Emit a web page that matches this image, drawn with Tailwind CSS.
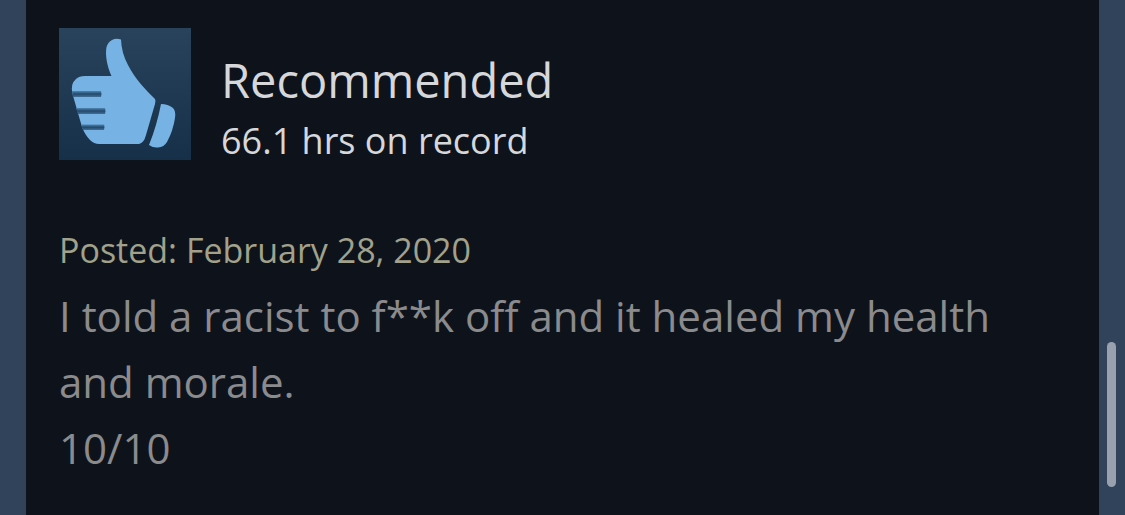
<!DOCTYPE html>
<html lang="en">
<head>
    <meta charset="UTF-8">
    <meta name="viewport" content="width=device-width, initial-scale=1.0">
    <title>Review - Recommended</title>
    <script src="https://cdn.jsdelivr.net/npm/@tailwindcss/browser@4"></script>
</head>
<body class="min-h-screen flex bg-[#30435b] px-[26px] font-['Open_Sans',sans-serif]">
    <main class="flex-1 bg-[#0e131b] px-[33px] pt-7">
        <!-- Verdict -->
        <header class="flex gap-[30px]">
            <svg class="w-[132px] h-[132px] shrink-0" viewBox="0 0 132 132" role="img" aria-label="Thumbs up">
                <defs>
                    <linearGradient id="tile" x1="0" y1="0" x2="0" y2="1">
                        <stop offset="0" stop-color="#28435b"/>
                        <stop offset="1" stop-color="#17304a"/>
                    </linearGradient>
                    <linearGradient id="gap" x1="0" y1="0" x2="0" y2="1">
                        <stop offset="0" stop-color="#4f86b2"/>
                        <stop offset="0.5" stop-color="#24486a"/>
                        <stop offset="1" stop-color="#3f6f98"/>
                    </linearGradient>
                </defs>
                <rect width="132" height="132" fill="url(#tile)"/>
                <!-- Hand -->
                <path fill="#76b2e4" d="M53 12Q57 10 62 11.500Q62.500 25 69 37C76 51 86 61 96 71Q97 73 96 76L87 107Q85 115 80 116H40Q35 116 31 112Q26 107 23 99L13.500 66Q11 56 17 51Q20 48 26 48H52.500C48 38 46 27 47.500 19Q49 14 53 12Z"/>
                <!-- Finger gaps -->
                <g fill="url(#gap)">
                    <path d="M13 63H42Q43 66 42 69H14Z"/>
                    <path d="M17 80H46Q47 83 46 86H19Z"/>
                    <path d="M22 96.500H45Q46 99 45 102H24Z"/>
                </g>
                <!-- Cuff -->
                <path fill="#76b2e4" d="M102 76Q109 76 114 80Q117 83 116 90Q114 103 108 114Q105 119 99 119.500Q94 120 90 117Q98 97 102 76Z"/>
            </svg>
            <div class="pt-6 text-[#d6d7da]">
                <h1 class="text-[47px] leading-[56px]">Recommended</h1>
                <p class="text-[36px] leading-[66px]">66.1 hrs on record</p>
            </div>
        </header>

        <!-- Review -->
        <p class="mt-[52px] text-[34px] leading-[48px] text-[#a1a18c]">Posted: February 28, 2020</p>
        <p class="mt-[9px] text-[42px] leading-[66px] text-[#8b8a8c]">I told a racist to f**k off and it healed my health and morale.<br>10/10</p>
    </main>

    <!-- Scroll thumb -->
    <div class="fixed right-[9px] bottom-7 w-[9px] h-[145px] rounded-full bg-[#98a1ad]"></div>
</body>
</html>
